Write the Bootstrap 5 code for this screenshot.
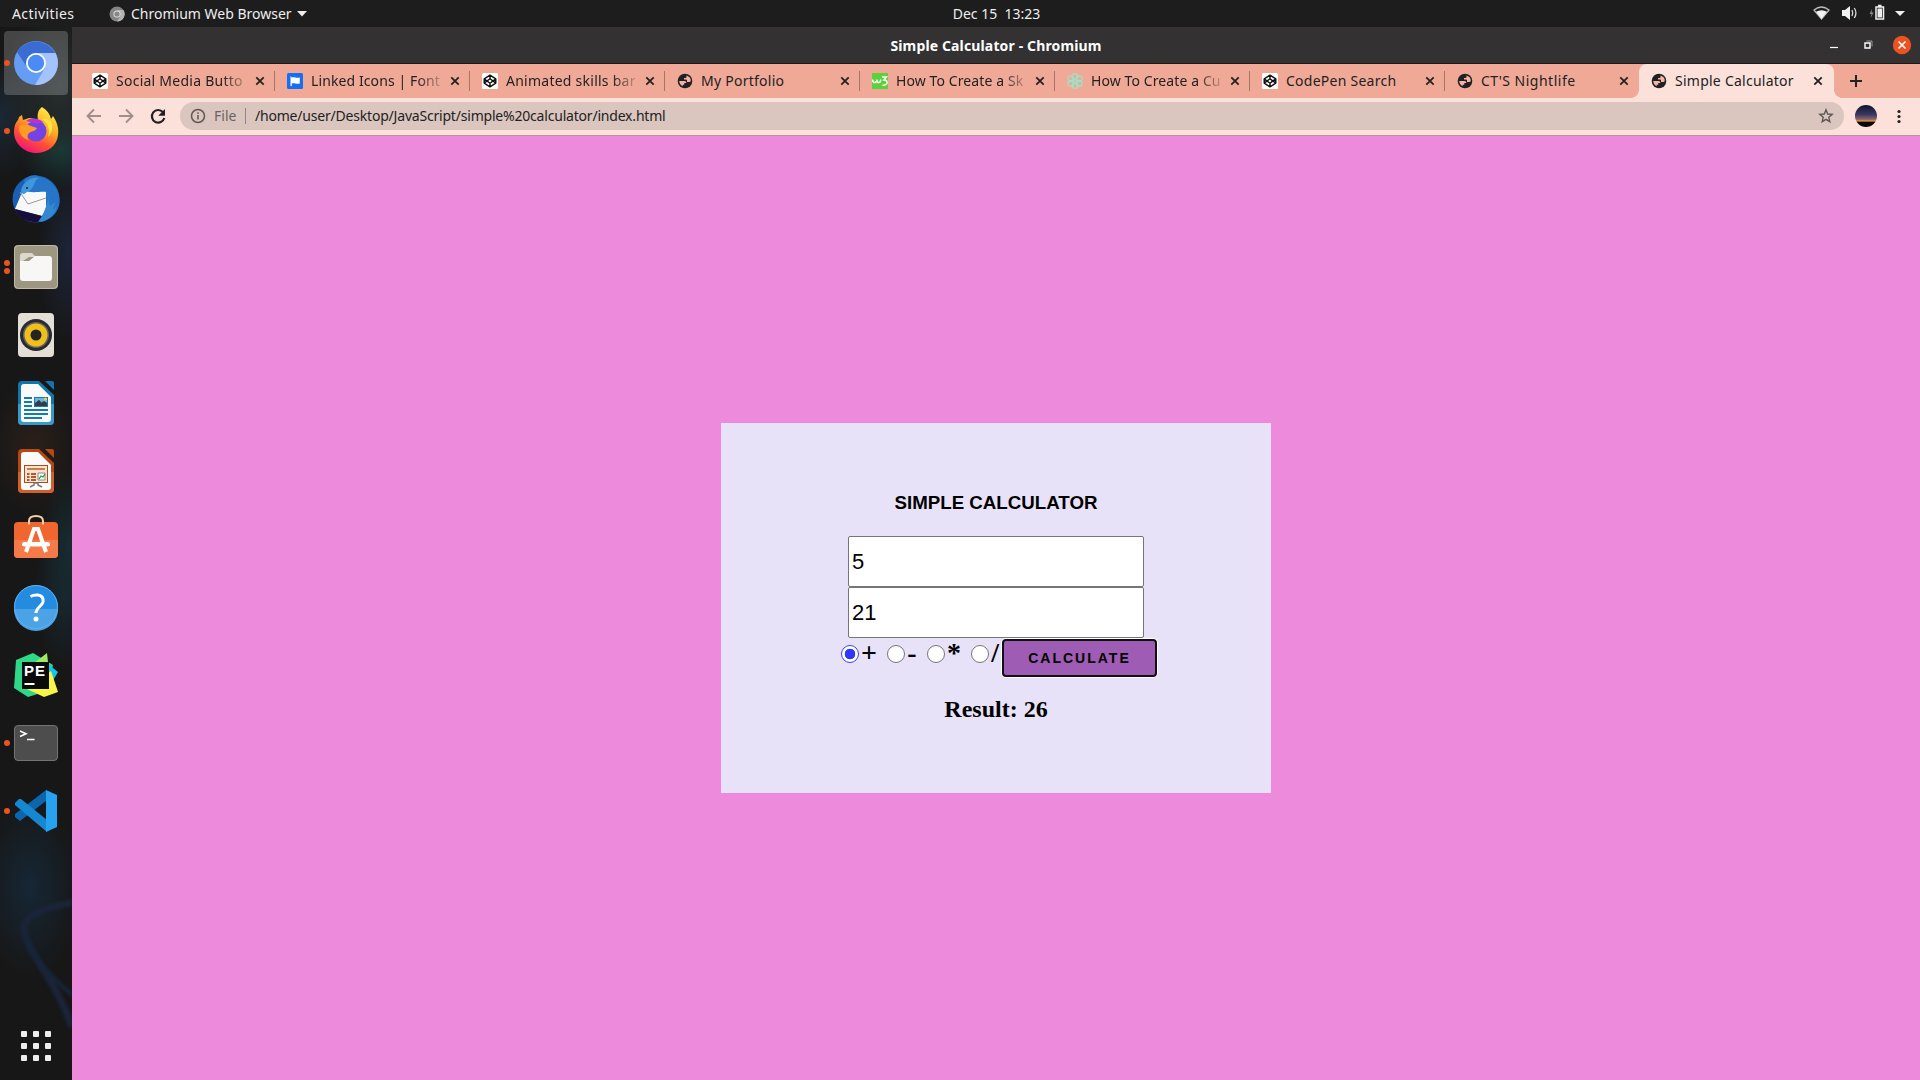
<!DOCTYPE html>
<html lang="en">
<head>
<meta charset="utf-8">
<title>Simple Calculator</title>
<link href="https://cdn.jsdelivr.net/npm/bootstrap@5.3.0/dist/css/bootstrap.min.css" rel="stylesheet">
<style>
body{font-family:"Noto Sans","Open Sans",sans-serif;font-size:14px;line-height:20px;width:1920px;height:1080px;overflow:hidden;background:#1d1d1d;color:#222}
svg{display:block;flex:none}
.top-bar{height:27px;background:#1d1d1d;color:#eee}
.side{flex:1 1 0}
.dock{width:72px;padding-top:4px;gap:4px;background:radial-gradient(60px 80px at 60px 60px,#28302f,transparent),radial-gradient(40px 60px at 0 90px,#1b2836,transparent),radial-gradient(44px 40px at 62px 122px,#193a38,transparent),radial-gradient(30px 90px at 68px 225px,#1c2438,transparent),radial-gradient(45px 70px at 34px 420px,#2b1f1a,transparent),radial-gradient(30px 80px at 70px 520px,#172c31,transparent),radial-gradient(30px 70px at 64px 570px,#17262d,transparent),radial-gradient(50px 90px at 30px 860px,#162735,transparent),#171717}
.dock-item{width:64px;height:64px;border-radius:4px}
.dock-item.on{background:#ffffff33}
.run{left:0;top:0;bottom:0;width:6px;gap:2.5px}
.run i{width:6px;height:6px;border-radius:50%;background:#e95420}
.swirl{left:0;top:812px;filter:blur(1.5px)}
.title-bar{height:37px;background:#333132;border-bottom:1px solid #1c1b1b;color:#fff;font-weight:700}
.win-name{letter-spacing:.14px;padding-top:2px}
.tabs-row{height:34px;background:#f1a997;padding-left:8px}
.tab-cell{width:195px;padding:0 8px 0 12px;letter-spacing:.1px}
.tab-cell .name{margin-left:8px;width:134px;overflow:hidden;white-space:nowrap}
.tab-cell .name.wide{letter-spacing:.25px}
.tab-cell .fade-end{-webkit-mask-image:linear-gradient(90deg,#000 106px,transparent 136px);mask-image:linear-gradient(90deg,#000 106px,transparent 136px)}
.tab-cell .x{margin-left:2px}
.tab-cell .bar{width:1px;height:20px;background:#a57468;margin-left:auto;margin-right:-8px}
.tab-cell.current{background:#fbe1d9;border-radius:8px 8px 0 0;margin-left:-1px}
.tab-cell.current .x{margin-left:5px}
.tab-cell.current::before,.tab-cell.current::after{content:"";position:absolute;bottom:0;width:8px;height:8px}
.tab-cell.current::before{left:-8px;background:radial-gradient(circle at 0 0,transparent 7.6px,#fbe1d9 8px)}
.tab-cell.current::after{right:-8px;background:radial-gradient(circle at 100% 0,transparent 7.6px,#fbe1d9 8px)}
.tool-row{height:38px;background:#fbe1d9;border-bottom:1px solid #b0988e;padding:0 13px 1px 14px}
.url-pill{height:28px;border-radius:14px;background:#dac6be;margin-left:14px;padding:0 10px}
.url{letter-spacing:-.2px}
.page-area{background:#ee8adb}
.calc{width:550px;height:370px;background:#e8e2f9;margin-top:-1px;padding-top:63px;color:#000;font-family:"Liberation Serif",serif}
.calc h3{font:700 18.72px/34px "Liberation Sans",sans-serif;margin:0 0 16px}
.calc .num{width:296px;height:51px;border:1px solid #767676;padding:3px 3px 1px;font:22px "Liberation Sans",sans-serif;border-radius:2px;background:#fff;outline:0;color:#000}
.ops{height:40px;width:316px;font-weight:700;font-size:28px;line-height:30px;margin-left:6px}
.ops input{appearance:none;width:18px;height:18px;border:1px solid #767676;border-radius:50%;background:#fff;margin:7px 2px 0 0;flex:none}
.ops input:checked{border:1.3px solid #3a41ff;background:radial-gradient(circle,#2f36ff 5px,#fff 5.6px)}
.ops label{padding-right:10.3px}
.go{width:155px;height:38px;margin-top:1px;border:2px solid #101010;border-radius:4px;box-shadow:0 0 0 1px #fff;background:#9f5cb4;font:700 14px "Liberation Sans",sans-serif;letter-spacing:2px;color:#000;padding:0}
.result{font-size:24px;font-weight:700;line-height:28px;margin-top:17px}
</style>
<script src="https://cdn.jsdelivr.net/npm/bootstrap@5.3.0/dist/js/bootstrap.bundle.min.js"></script>
</head>
<body class="d-flex flex-column">
<svg width="0" height="0" class="position-absolute">
<defs>
<symbol id="x" viewBox="0 0 16 16"><path d="M4.3 4.3l7.4 7.4M11.7 4.3l-7.4 7.4" stroke="#222" stroke-width="1.8"/></symbol>
<symbol id="pen" viewBox="0 0 16 16"><rect width="16" height="16" rx="1.5" fill="#fff"/><path d="M8 2.2l5.8 3.7v4.2L8 13.8l-5.8-3.7V5.9zM8 2.2v3.6M8 10.2v3.6M2.2 5.9L8 10.2l5.8-4.3M2.2 10.1L8 5.8l5.8 4.3" fill="none" stroke="#111" stroke-width="1.4" stroke-linejoin="round"/></symbol>
<symbol id="globe" viewBox="0 0 16 16"><circle cx="8" cy="8" r="7.3" fill="#202124"/><path d="M2.300 8h5.200q1.800.2 2 1.900h-2.200v1.800H5.700v1.600Q2.300 11.500 2.300 8zM9.500 2.600v1.300q0 1-1.100 1H7v1.600h2q1 0 1 1.100v1.300h2.400q1 0 1.300-.9.300-3.900-4.200-5.400z" fill="#f4b5a5"/></symbol>
</defs>
</svg>
<header class="top-bar d-flex align-items-center">
  <div class="side d-flex align-items-center">
    <span style="margin-left:12px;width:97px;letter-spacing:.4px">Activities</span>
    <svg width="16" height="16" viewBox="0 0 16 16"><circle cx="8" cy="8" r="7.500" fill="#858585"/><path d="M8 4h6.500A7.500 7.500 0 0 1 8 15.500L11.500 10z" fill="#b4b4b4"/><circle cx="8" cy="8" r="3.600" fill="#ddd"/><circle cx="8" cy="8" r="2.600" fill="#888"/></svg>
    <span style="margin-left:6px;width:162px">Chromium&nbsp;Web&nbsp;Browser</span>
    <svg width="10" height="6" class="ms-1" viewBox="0 0 10 6"><path d="M0 0h10L5 5.500z" fill="#eee"/></svg>
  </div>
  <div style="padding-left:73px">Dec 15&nbsp; 13:23</div>
  <div class="side d-flex align-items-center justify-content-end">
    <svg width="108" height="27" viewBox="0 0 108 27"><path d="M2 10Q9.500 4 17 10L9.500 19z" fill="none" stroke="#bbb" stroke-width="1.300"/><path d="M4 11.800q5.500-3 11 0L9.500 19z" fill="#f2f2f2"/><path d="M30 10h3l5-4v14l-5-4h-3z" fill="#f2f2f2"/><path d="M40 10q1.500 3 0 6M42.300 8q3.300 5 0 10" fill="none" stroke="#ddd" stroke-width="1.300"/><path d="M60 9l-2.500 5h2l-1 4 3.200-5.500h-2z" fill="#888"/><path d="M64 7h7.500v12H64zM66 5.500h3.500" fill="none" stroke="#f2f2f2" stroke-width="1.500"/><path d="M65.500 8.500h4.500v9h-4.500z" fill="#eee"/><path d="M83 11h10l-5 5z" fill="#eee"/></svg>
  </div>
</header>
<div class="d-flex flex-grow-1">
<nav class="dock d-flex flex-column flex-shrink-0 align-items-center position-relative overflow-hidden">
  <svg class="swirl position-absolute" width="72" height="220" viewBox="0 0 72 220" fill="none"><path d="M72 64C30 70 20 84 25 96c6 22 30 44 47 92" stroke="#1b2438" stroke-width="7"/><path d="M26 96c6 20 25 42 46 60" stroke="#15263a" stroke-width="4"/></svg>
  <div class="dock-item on position-relative d-flex align-items-center justify-content-center"><div class="run position-absolute d-flex flex-column justify-content-center"><i></i></div>
    <svg width="48" height="48"><circle cx="24" cy="24" r="22" fill="#659df5"/><path d="M5 13A22 22 0 0 1 43 14H24a10 10 0 0 0-9 14z" fill="#3a6cd3"/><path d="M24 14h19.500A22 22 0 0 1 23 46l10-17z" fill="#a2c3fb"/><circle cx="24" cy="24" r="10" fill="#fff"/><circle cx="24" cy="24" r="8.200" fill="#4a8bf5"/></svg></div>
  <div class="dock-item position-relative d-flex align-items-center justify-content-center"><div class="run position-absolute d-flex flex-column justify-content-center"><i></i></div>
    <svg width="48" height="48"><defs><linearGradient id="ff" x1=".8" y1="0" x2=".3" y2="1"><stop offset="0" stop-color="#fff04a"/><stop offset=".4" stop-color="#ffac24"/><stop offset=".7" stop-color="#ff5136"/><stop offset="1" stop-color="#f0127a"/></linearGradient></defs><path d="M30 0c5 3 8 7 9 12l2-3c4 6 6 12 5 19C45 39 35 46 24 46S2 37 2 25c0-5 1-9 4-12l1-3 3-2 1 5 6-2c3 0 7 1 9 2-1-6 0-10 4-13z" fill="url(#ff)"/><circle cx="24" cy="24" r="10.500" fill="#7542e5"/><path d="M14 14c5-4 14-3 18 2-3-1-5 0-6 1z" fill="#b535d3"/><path d="M7 19c5-2 9-1 12 0l6 2c-2 4-6 3-8 5-2 2-2 5 0 7-6-1-11-7-10-14z" fill="#ff9a25"/><path d="M30 12c5 3 9 10 6 18 3-3 5-8 4-14-2-3-6-5-10-4z" fill="#ffe340"/></svg></div>
  <div class="dock-item d-flex align-items-center justify-content-center">
    <svg width="48" height="48"><circle cx="24" cy="24" r="23.500" fill="#1b5fb4"/><path d="M12 5c4-5 12-6 16-3 14 2 22 17 19 29-3 9-10 15-19 16l4-7-18-25z" fill="#2675c8"/><path d="M3 34l8-19c8 4 18 1 23 2v16l-4 8z" fill="#f8f8f8"/><path d="M8 17l8 12 18-6" fill="none" stroke="#999" stroke-width="1"/><path d="M3 34l27 7-2 6C17 48 7 44 3 34z" fill="#190c3a"/><path d="M9 17c0-9 10-16 18-14-6 3-3 8-10 13-3 1-5 4-6 3z" fill="#3f97dd"/><path d="M34 14c5 10-1 18-2 24l-6 9c11-1 17-8 19-16l-4 4 2-8-5 4z" fill="#3488d2"/><circle cx="15" cy="13" r="1" fill="#123"/></svg></div>
  <div class="dock-item position-relative d-flex align-items-center justify-content-center"><div class="run position-absolute d-flex flex-column justify-content-center"><i></i><i></i></div>
    <svg width="48" height="48"><rect x="2" y="2" width="44" height="44" rx="4" fill="#9d9681"/><rect x="2.500" y="2.500" width="43" height="43" rx="4" fill="none" stroke="#c0b9a8"/><path d="M8 13q0-3 3-3h9l4 4h-7L8 20z" fill="#dcd8cd"/><path d="M8 18h9l6-5h14q3 0 3 3v19q0 3-3 3H11q-3 0-3-3z" fill="#f8f7f5"/></svg></div>
  <div class="dock-item d-flex align-items-center justify-content-center">
    <svg width="48" height="48"><rect x="6" y="2" width="36" height="44" rx="4" fill="#e4dfd5"/><circle cx="24" cy="24" r="16" fill="#282a36"/><circle cx="24" cy="24" r="13" fill="#65635a"/><circle cx="24" cy="24" r="11.500" fill="#efc019"/><circle cx="24" cy="24" r="5.500" fill="#222426"/></svg></div>
  <div class="dock-item d-flex align-items-center justify-content-center">
    <svg width="48" height="48"><path d="M10 2h17l15 14v26q0 4-4 4H10q-4 0-4-4V6q0-4 4-4z" fill="#1475ad"/><path d="M6 25h36v17q0 4-4 4H10q-4 0-4-4z" fill="#3a9bcb"/><path d="M33 2h7q2 0 2 2v7z" fill="#1475ad"/><path d="M12 5h14l13 13v22q0 3-3 3H12q-3 0-3-3V8q0-3 3-3z" fill="#fafafa"/><path d="M12 19h8M12 23h8M12 27h8M12 31h24M12 35h24M12 39h18" stroke="#147bb2" stroke-width="2"/><rect x="22" y="18" width="14" height="10" fill="#147bb2"/><path d="M23 19h12v5l-4-2-2 2-2-3-4 4z" fill="#6ab5df"/><path d="M23 27v-3l4-3 3 3 2-2 3 2v3z" fill="#333e43"/><circle cx="33.500" cy="20" r="1.500" fill="#fc3"/></svg></div>
  <div class="dock-item d-flex align-items-center justify-content-center">
    <svg width="48" height="48"><path d="M10 2h17l15 14v26q0 4-4 4H10q-4 0-4-4V6q0-4 4-4z" fill="#b54712"/><path d="M6 25h36v17q0 4-4 4H10q-4 0-4-4z" fill="#cf622c"/><path d="M33 2h7q2 0 2 2v7z" fill="#b54712"/><path d="M12 5h14l13 13v22q0 3-3 3H12q-3 0-3-3V8q0-3 3-3z" fill="#fafafa"/><rect x="12.500" y="18.500" width="23" height="17" fill="#fae3d2" stroke="#a94b1d"/><path d="M15 22h18" stroke="#d27a45" stroke-width="2"/><path d="M15 27h2.500M15 30h2.500M15 33h2.500M19 27h5M19 30h5M19 33h5" stroke="#b5582a" stroke-width="2"/><path d="M26 26h7v7h-7z" fill="#fff" stroke="#888"/><path d="M27 32l2-3 2 1 2-3" fill="none" stroke="#299b29" stroke-width="1.300"/><path d="M18 40l4-2v-2h4v2l4 2" fill="none" stroke="#777" stroke-width="1.500"/></svg></div>
  <div class="dock-item d-flex align-items-center justify-content-center">
    <svg width="48" height="48"><path d="M17 9V6q0-5 7-5t7 5v3" fill="none" stroke="#eed3a8" stroke-width="2"/><rect x="2" y="7" width="44" height="36" rx="4" fill="#f1662e"/><path d="M2 25h44v14q0 4-4 4H6q-4 0-4-4z" fill="#f47b49"/><path d="M17 9.500V6M31 9.500V6" stroke="#eed3a8" stroke-width="2"/><path d="M14 37l8-23h4l8 23" fill="none" stroke="#fff" stroke-width="4"/><rect x="10" y="27" width="28" height="4.500" rx="2.200" fill="#fff"/></svg></div>
  <div class="dock-item d-flex align-items-center justify-content-center">
    <svg width="48" height="48"><circle cx="24" cy="24" r="22" fill="#238be0"/><path d="M2 26a22 22 0 0 0 44 0z" fill="#4ba3e6"/><circle cx="24" cy="24" r="21.500" fill="none" stroke="#63b0ed"/><path d="M18.500 13.500Q22 11.500 26 12q6 1 5 7c-1 4-7 6-7 11" fill="none" stroke="#fff" stroke-width="3"/><circle cx="24" cy="36" r="2.500" fill="#fff"/></svg></div>
  <div class="dock-item d-flex align-items-center justify-content-center">
    <svg width="48" height="48"><path d="M4 9l17-7 20 12-6 26-19 6L2 37z" fill="#2fd889"/><path d="M22 12L35 2l3 28z" fill="#9de864"/><path d="M36 13l10 8-6 10z" fill="#12c5ea"/><path d="M15 38l24-18 7 21-14 5z" fill="#f9f647"/><rect x="10" y="11" width="27" height="27" fill="#0b0b0b"/><rect x="12.500" y="32" width="10" height="2" fill="#fff"/><text x="12" y="25" font-family="Liberation Sans" font-weight="700" font-size="15" fill="#fff" textLength="21">PE</text></svg></div>
  <div class="dock-item position-relative d-flex align-items-center justify-content-center"><div class="run position-absolute d-flex flex-column justify-content-center"><i></i></div>
    <svg width="48" height="48"><rect x="2.500" y="6.500" width="43" height="35" rx="3.500" fill="#4d4d4d" stroke="#747474"/><path d="M8 12l6 2.700L8 17.500M15 20.500h7.500" fill="none" stroke="#fff" stroke-width="1.600"/></svg></div>
  <div class="dock-item position-relative d-flex align-items-center justify-content-center"><div class="run position-absolute d-flex flex-column justify-content-center"><i></i></div>
    <svg width="48" height="48"><path d="M34 3v11L8 34l-5-4v-3z" fill="#0b66ad"/><path d="M3 16l4-4h2l26 21v12L3 18z" fill="#1688d2"/><path d="M34 3l11 5v32l-11 5z" fill="#26a2f1"/></svg></div>
  <svg class="mt-auto" style="margin-bottom:19px" width="30" height="30" fill="#eee"><g id="r"><rect width="6" height="6" rx="1"/><rect x="12" width="6" height="6" rx="1"/><rect x="24" width="6" height="6" rx="1"/></g><use href="#r" y="12"/><use href="#r" y="24"/></svg>
</nav>
<div class="d-flex flex-column flex-grow-1">
  <div class="title-bar d-flex align-items-center">
    <div class="side"></div><div class="win-name">Simple Calculator - Chromium</div>
    <div class="side d-flex justify-content-end"><svg width="100" height="36" fill="none"><path d="M10 20.500h8" stroke="#fff" stroke-width="1.200"/><path d="M45 16h5v5h-5z" stroke="#fff" stroke-width="1.400"/><path d="M46.500 14h5.500v5.500" stroke="#999"/><circle cx="82" cy="18" r="9.200" fill="#e95420"/><path d="M78.500 14.500l7 7M85.500 14.500l-7 7" stroke="#fff" stroke-width="1.600"/></svg></div>
  </div>
  <div class="tabs-row d-flex">
    <div class="tab-cell d-flex align-items-center"><svg width="16" height="16"><use href="#pen"/></svg><span class="name fade-end wide">Social Media Butto</span><svg class="x" width="16" height="16"><use href="#x"/></svg><i class="bar"></i></div>
    <div class="tab-cell d-flex align-items-center"><svg width="16" height="16"><rect width="16" height="16" rx="1.500" fill="#146ff2"/><path d="M3.500 3v10h1.300v-2.500c3-1 4 1 8 0V4.500c-4 1-5-1-8 0z" fill="#fff"/></svg><span class="name fade-end">Linked Icons | Font</span><svg class="x" width="16" height="16"><use href="#x"/></svg><i class="bar"></i></div>
    <div class="tab-cell d-flex align-items-center"><svg width="16" height="16"><use href="#pen"/></svg><span class="name fade-end wide">Animated skills bar</span><svg class="x" width="16" height="16"><use href="#x"/></svg><i class="bar"></i></div>
    <div class="tab-cell d-flex align-items-center"><svg width="16" height="16"><use href="#globe"/></svg><span class="name wide">My Portfolio</span><svg class="x" width="16" height="16"><use href="#x"/></svg><i class="bar"></i></div>
    <div class="tab-cell d-flex align-items-center"><svg width="16" height="16"><rect width="16" height="16" fill="#5bd23a"/><path d="M.5 6.500Q1 10 3 9.500T5 6.500Q5 10 7 9.500t1.500-3M10 4h4.500L12 7q3.500 0 3 3-1 3-4.500 2" fill="none" stroke="#fff" stroke-width="1.500"/></svg><span class="name fade-end">How To Create a Sk</span><svg class="x" width="16" height="16"><use href="#x"/></svg><i class="bar"></i></div>
    <div class="tab-cell d-flex align-items-center"><svg width="16" height="16" fill="none" stroke="#96e6cb" stroke-width="1.200"><circle cx="8" cy="3.500" r="2.900"/><circle cx="8" cy="12.500" r="2.900"/><circle cx="3.800" cy="5.700" r="2.900"/><circle cx="12.200" cy="5.700" r="2.900"/><circle cx="3.800" cy="10.300" r="2.900"/><circle cx="12.200" cy="10.300" r="2.900"/><circle cx="8" cy="8" r="1.700"/></svg><span class="name fade-end">How To Create a Cu</span><svg class="x" width="16" height="16"><use href="#x"/></svg><i class="bar"></i></div>
    <div class="tab-cell d-flex align-items-center"><svg width="16" height="16"><use href="#pen"/></svg><span class="name wide">CodePen Search</span><svg class="x" width="16" height="16"><use href="#x"/></svg><i class="bar"></i></div>
    <div class="tab-cell d-flex align-items-center"><svg width="16" height="16"><use href="#globe"/></svg><span class="name" style="letter-spacing:.5px">CT'S Nightlife</span><svg class="x" width="16" height="16"><use href="#x"/></svg></div>
    <div class="tab-cell current position-relative d-flex align-items-center"><svg width="16" height="16"><use href="#globe"/></svg><span class="name wide">Simple Calculator</span><svg class="x" width="16" height="16"><use href="#x"/></svg></div>
    <svg class="align-self-center" style="margin-left:14px" width="16" height="16"><path d="M8 2v12M2 8h12" stroke="#222" stroke-width="2"/></svg>
  </div>
  <div class="tool-row d-flex align-items-center">
    <svg width="80" height="20" fill="none"><path d="M15 10H2M8 3.500L1.500 10 8 16.500M33 10h13M40 3.500l6.500 6.500-6.500 6.500" stroke="#9f8e89" stroke-width="1.900"/><path d="M77 6.200A6.300 6.300 0 1 0 78.300 12" stroke="#202124" stroke-width="2.200"/><path d="M79 3v6.800h-6.800z" fill="#202124"/></svg>
    <div class="url-pill flex-grow-1 d-flex align-items-center"><svg width="16" height="16" fill="none" stroke="#5f5754" stroke-width="1.500"><circle cx="8" cy="8" r="6.500"/><path d="M8 7v4.500M8 4.200v1.600"/></svg><span style="margin-left:8px;width:31px;color:#6a6462">File</span><span style="width:1px;height:16px;background:#948783"></span><span class="url" style="margin-left:9px">/home/user/Desktop/JavaScript/simple%20calculator/index.html</span>
    <svg class="ms-auto" width="16" height="16"><path d="M8 1.800l1.700 4.200 4.500.4-3.400 2.900 1 4.400L8 11.300l-3.800 2.400 1-4.400-3.400-2.900 4.500-.4z" fill="none" stroke="#5f5754" stroke-width="1.400"/></svg></div>
    <svg style="margin-left:10px" width="24" height="24"><defs><linearGradient id="sky" x2="0" y2="1"><stop offset="0" stop-color="#0b1230"/><stop offset=".45" stop-color="#3c3c60"/><stop offset=".65" stop-color="#8d6470"/><stop offset=".73" stop-color="#f09a35"/><stop offset=".78" stop-color="#0a0808"/></linearGradient></defs><circle cx="12" cy="12" r="11" fill="url(#sky)"/></svg>
    <svg style="margin-left:13px" width="16" height="16" fill="#202124"><circle cx="8" cy="3.500" r="1.600"/><circle cx="8" cy="8.500" r="1.600"/><circle cx="8" cy="13.500" r="1.600"/></svg>
  </div>
  <main class="page-area flex-grow-1 d-flex align-items-center justify-content-center">
    <section class="calc d-flex flex-column align-items-center">
      <h3>SIMPLE CALCULATOR</h3>
      <input class="num" type="text" value="5" aria-label="First">
      <input class="num" type="text" value="21" aria-label="Second">
      <div class="ops d-flex align-items-start">
        <input type="radio" name="op" checked><label>+</label><input type="radio" name="op"><label>-</label><input type="radio" name="op"><label>*</label><input type="radio" name="op"><label class="pe-0">/</label>
        <button class="go flex-shrink-0 ms-auto" type="button">CALCULATE</button>
      </div>
      <div class="result">Result: 26</div>
    </section>
  </main>
</div>
</div>
</body>
</html>
